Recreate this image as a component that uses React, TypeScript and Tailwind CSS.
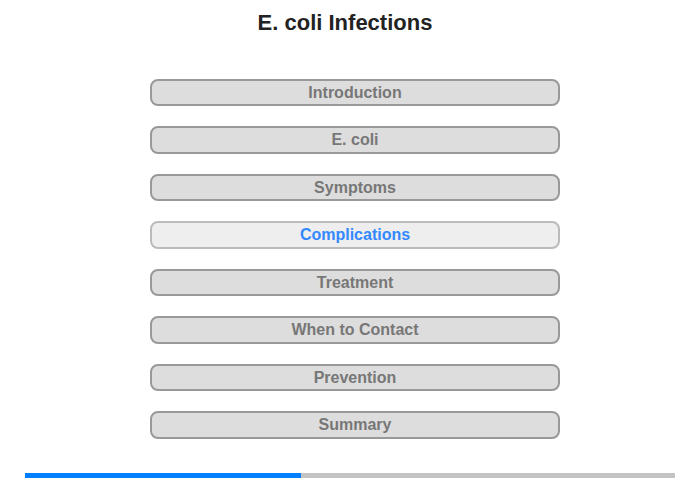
import React from "react";

const items = [
  "Introduction",
  "E. coli",
  "Symptoms",
  "Complications",
  "Treatment",
  "When to Contact",
  "Prevention",
  "Summary",
];

export default function App() {
  return (
    <div className="w-[700px] h-[480px] bg-white relative" style={{ fontFamily: '"Liberation Sans", Arial, sans-serif' }}>
      <div className="pt-[9px] pr-[10px] text-center text-[22px] leading-[28px] font-bold text-[#222222]">E. coli Infections</div>
      <div className="mt-[42px] pl-[150px] flex flex-col items-start gap-[20.2px]">
        {items.map((t) => {
          const active = t === "Complications";
          return (
            <div
              key={t}
              className={
                active
                  ? "w-[410px] h-[27.3px] rounded-[8px] border-2 border-[#bbbbbb] bg-[#eeeeee] flex items-center justify-center text-[16px] font-bold text-[#3388ff]"
                  : "w-[410px] h-[27.3px] rounded-[8px] border-2 border-[#999999] bg-[#dddddd] flex items-center justify-center text-[16px] font-bold text-[#777777]"
              }
            >
              {t}
            </div>
          );
        })}
      </div>
      <div className="mt-[34px] mx-[25px] h-[5px] flex">
        <div className="w-[276px] bg-[#0080ff]" />
        <div className="flex-1 bg-[#c4c4c4]" />
      </div>
    </div>
  );
}
